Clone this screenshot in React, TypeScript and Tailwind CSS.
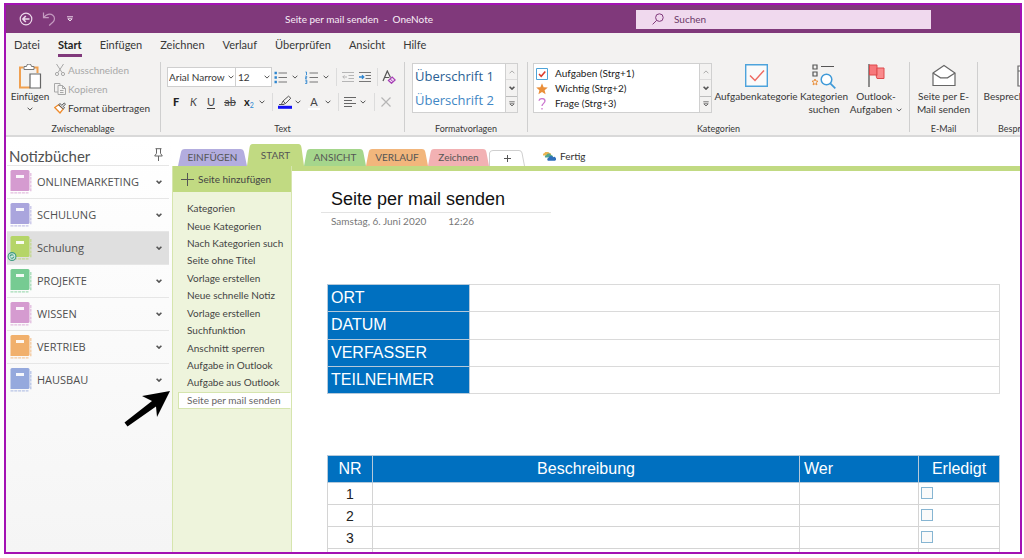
import { useState, type ReactNode } from 'react'
import clsx from 'clsx'

const MENU = ['Datei', 'Start', 'Einfügen', 'Zeichnen', 'Verlauf', 'Überprüfen', 'Ansicht', 'Hilfe']

const NOTEBOOKS = [
  { name: 'ONLINEMARKETING', color: '#d59bd0' },
  { name: 'SCHULUNG', color: '#aaa5dd' },
  { name: 'Schulung', color: '#b5d568', active: true },
  { name: 'PROJEKTE', color: '#76cb92' },
  { name: 'WISSEN', color: '#d59bd0' },
  { name: 'VERTRIEB', color: '#f1b06c' },
  { name: 'HAUSBAU', color: '#95a9dd' },
]

const SECTIONS = [
  { name: 'EINFÜGEN', color: '#b3addf', size: 'w-[69px] h-[17px]' },
  { name: 'START', color: '#c1da82', size: 'w-[57px] h-[22px]' },
  { name: 'ANSICHT', color: '#a5d68c', size: 'w-[62px] h-[17px]' },
  { name: 'VERLAUF', color: '#f2b67c', size: 'w-[62px] h-[17px]' },
  { name: 'Zeichnen', color: '#f2b1b3', size: 'w-[61px] h-[17px]' },
]

const PAGES = [
  'Kategorien',
  'Neue Kategorien',
  'Nach Kategorien such',
  'Seite ohne Titel',
  'Vorlage erstellen',
  'Neue schnelle Notiz',
  'Vorlage erstellen',
  'Suchfunktion',
  'Anschnitt sperren',
  'Aufgabe in Outlook',
  'Aufgabe aus Outlook',
  'Seite per mail senden',
]

function Chevron({ bold = false }: { bold?: boolean }) {
  return (
    <svg viewBox="0 0 6 4" className="w-1.5 h-1 shrink-0" fill="none" stroke="#555" strokeWidth={bold ? 1.6 : 1}>
      <path d="M.6.7 3 3.1 5.4.7" />
    </svg>
  )
}

function Tool({ label, w, children }: { label: string; w: string; children: ReactNode }) {
  return (
    <button type="button" aria-label={label} className={clsx('h-5 flex items-center justify-center shrink-0', w)}>
      {children}
    </button>
  )
}

function Sep({ w }: { w: string }) {
  return (
    <span className={clsx('flex justify-center shrink-0', w)}>
      <span className="w-px h-[18px] bg-[#dcdcdc]" />
    </span>
  )
}

function Group({ label, w, children }: { label: string; w: string; children: ReactNode }) {
  return (
    <section className={clsx('h-[70px] flex flex-col shrink-0 border-r border-[#cfcfcf]', w)}>
      <div className="flex h-[59px] shrink-0">{children}</div>
      <p className="text-center text-[9px] leading-4 whitespace-nowrap">{label}</p>
    </section>
  )
}

function BigButton({ lines, w, caret, children }: { lines: string[]; w: string; caret?: boolean; children: ReactNode }) {
  return (
    <button type="button" className={clsx('flex flex-col items-center shrink-0 pt-0.5 text-[10px] leading-[13px] whitespace-nowrap', w)}>
      <span className="h-[26px]">{children}</span>
      {lines.map((line, i) => (
        <span key={line} className="flex items-center gap-1">
          {line}
          {caret && i === lines.length - 1 && <Chevron />}
        </span>
      ))}
    </button>
  )
}

function GalleryScroll() {
  return (
    <div className="w-3 shrink-0 flex flex-col divide-y divide-[#bdbdbd] border-l border-[#d0d0d0] bg-[#f3f2f1]">
      <button type="button" aria-label="Nach oben" className="flex-1 flex items-center justify-center opacity-40">
        <svg viewBox="0 0 6 4" className="w-1.5 h-1" fill="none" stroke="#444"><path d="M.6 3.3 3 .9l2.4 2.4" /></svg>
      </button>
      <button type="button" aria-label="Nach unten" className="flex-1 flex items-center justify-center"><Chevron bold /></button>
      <button type="button" aria-label="Mehr" className="flex-1 flex items-center justify-center">
        <svg viewBox="0 0 6 6" className="size-1.5" fill="none" stroke="#555" strokeWidth=".8"><path d="M.3.8h5.4M.8 2.8 3 5l2.2-2.2z" /></svg>
      </button>
    </div>
  )
}

function TitleBar() {
  return (
    <header className="h-7 shrink-0 bg-[#80397b] text-[#f8edf7] flex items-center text-[10px]">
      <div className="flex w-[279px] shrink-0 items-center gap-[9px] pl-[13px]">
        <button type="button" aria-label="Zurück">
          <svg viewBox="0 0 14 14" className="size-3.5" fill="none" stroke="#ecd9ea" strokeWidth="1.2">
            <circle cx="7" cy="7" r="5.8" />
            <path d="M10.5 7H4M6.8 4 3.9 7l2.9 3" strokeWidth="1.6" />
          </svg>
        </button>
        <button type="button" aria-label="Rückgängig">
          <svg viewBox="0 0 14 14" className="size-3.5" fill="none" stroke="#c49bc0" strokeWidth="1.2">
            <path d="M1.5.5v5.200h5.300M1.800 5.400C4 2.400 8 1 10.800 3.200c2.400 2 2 5 .2 6.800L7.200 13.500" />
          </svg>
        </button>
        <button type="button" aria-label="Anpassen" className="pl-0.5">
          <svg viewBox="0 0 6 6" className="size-1.5" fill="none" stroke="#ecd9ea"><path d="M0 .8h6M.8 2.800 3 5l2.200-2.200z" /></svg>
        </button>
      </div>
      <h1 className="whitespace-pre">Seite per mail senden  -  OneNote</h1>
      <div className="flex-1 flex justify-end pr-[89px]">
        <label className="flex items-center w-[295px] h-[19px] bg-[#f0d9ee] pl-4 gap-2.5">
          <svg viewBox="0 0 12 12" className="size-3" fill="none" stroke="#80397b">
            <circle cx="7.400" cy="4.600" r="3.800" />
            <path d="M4.600 7.400.6 11.400" />
          </svg>
          <input type="search" aria-label="Suchen" placeholder="Suchen" className="flex-1 min-w-0 bg-transparent outline-none placeholder:text-[#6d3a69]" />
        </label>
      </div>
    </header>
  )
}

function TextGroup() {
  return (
    <div className="pl-1.5 flex flex-col gap-[5px] pt-[5px] text-[11px]">
      <div className="flex items-center">
        <label className="relative flex items-center">
          <select aria-label="Schriftart" className="appearance-none w-[69px] h-5 pl-px bg-white border border-[#cfcfcf] text-[10px]">
            <option>Arial Narrow</option>
          </select>
          <span className="absolute right-0.5 pointer-events-none"><Chevron /></span>
        </label>
        <label className="relative flex items-center -ml-px">
          <select aria-label="Schriftgrad" className="appearance-none w-[37px] h-5 pl-0.5 bg-white border border-[#cfcfcf] text-[10px]">
            <option>12</option>
          </select>
          <span className="absolute right-0.5 pointer-events-none"><Chevron /></span>
        </label>
        <Tool label="Aufzählung" w="w-[17px]">
          <svg viewBox="0 0 13 13" className="size-[13px]">
            <path d="M4.500 2H13M4.500 6.500H13M4.500 11H13" stroke="#777" />
            <path d="M.5.800h2.400v2.400H.5zM.5 5.300h2.400v2.400H.5zM.5 9.800h2.400v2.400H.5z" fill="#2e86d0" />
          </svg>
        </Tool>
        <Tool label="Aufzählungsart" w="w-3"><Chevron /></Tool>
        <Tool label="Nummerierung" w="w-5">
          <svg viewBox="0 0 13 13" className="size-[13px]" fill="none">
            <path d="M4.500 2H13M4.500 6.500H13M4.500 11H13" stroke="#777" />
            <path d="M.5 1h1v3M.2 5.200h1.500v1.300H.5v1.300h1.500M.2 9.200h1.600v3.300H.2M.5 10.800h1.300" stroke="#2e86d0" strokeWidth=".9" />
          </svg>
        </Tool>
        <Tool label="Nummerierungsart" w="w-2.5"><Chevron /></Tool>
        <Sep w="w-2.5" />
        <Tool label="Einzug verkleinern" w="w-3.5">
          <svg viewBox="0 0 12 12" className="size-3" fill="none" stroke="#b5b5b5">
            <path d="M0 1.500h12M6.500 4.500H12M6.500 7.500H12M0 10.500h12M5 6H.8M2.500 4.300.8 6l1.700 1.700" />
          </svg>
        </Tool>
        <Tool label="Einzug vergrößern" w="w-5">
          <svg viewBox="0 0 12 12" className="size-3" fill="none" stroke="#777">
            <path d="M0 1.500h12M6.500 4.500H12M6.500 7.500H12M0 10.500h12" />
            <path d="M0 6h4.600M3 4.200 4.800 6 3 7.800" stroke="#2e86d0" strokeWidth="1.300" />
          </svg>
        </Tool>
        <Sep w="w-1" />
        <Tool label="Formatierung löschen" w="w-5">
          <svg viewBox="0 0 14 14" className="size-3.5" fill="none">
            <path d="M1 11 5.300 1 8.500 7.500M2.600 7.500h4.600" stroke="#555" strokeWidth="1.200" />
            <path d="m6.400 10.400 3.800-3.300 3 2.900-3.700 3.300z" fill="#f3dff5" stroke="#a63fb5" strokeWidth="1.200" />
            <path d="m8.200 8.900 2.900 2.900" stroke="#a63fb5" />
          </svg>
        </Tool>
      </div>
      <div className="flex items-center text-[#444]">
        <Tool label="Fett" w="w-[18px]"><b className="font-black text-[#222]">F</b></Tool>
        <Tool label="Kursiv" w="w-[17px]"><i>K</i></Tool>
        <Tool label="Unterstrichen" w="w-[18px]"><u className="underline-offset-2">U</u></Tool>
        <Tool label="Durchgestrichen" w="w-5"><s>ab</s></Tool>
        <Tool label="Tiefgestellt" w="w-[18px]">
          <span><b className="text-[#222]">x</b><sub className="text-[7px] text-[#2e86d0]">2</sub></span>
        </Tool>
        <Tool label="Weitere Schriftoptionen" w="w-2"><Chevron /></Tool>
        <Sep w="w-3" />
        <Tool label="Texthervorhebung" w="w-3.5">
          <svg viewBox="0 0 14 14" className="size-3.5">
            <path d="M3.500 9.200 5 6l5.500-4.800 2.300 2L7.600 8.500 5 9.500M5 6l2.600 2.500M1 9.500h5" fill="none" stroke="#555" />
            <path d="M0 10.800h14v3H0z" fill="#1111f5" />
          </svg>
        </Tool>
        <Tool label="Hervorhebungsfarbe" w="w-3"><Chevron /></Tool>
        <Tool label="Schriftfarbe" w="w-5">
          <span className="w-3 border-b-2 border-white leading-[13px]">A</span>
        </Tool>
        <Tool label="Farbauswahl" w="w-2"><Chevron /></Tool>
        <Sep w="w-3" />
        <Tool label="Ausrichtung" w="w-3">
          <svg viewBox="0 0 12 12" className="size-3" stroke="#666"><path d="M0 1.500h12M0 4.500h8M0 7.500h12M0 10.500h8" /></svg>
        </Tool>
        <Tool label="Ausrichtungsart" w="w-3.5"><Chevron /></Tool>
        <Sep w="w-2" />
        <Tool label="Löschen" w="w-4">
          <svg viewBox="0 0 10 10" className="size-2.5" stroke="#b5b5b5" strokeWidth="1.200"><path d="m.5.500 9 9M9.500.500l-9 9" /></svg>
        </Tool>
      </div>
    </div>
  )
}

function Ribbon() {
  return (
    <div className="shrink-0 bg-[#f3f2f1] text-[#383838] border-b-2 border-[#d9d9d9]">
      <nav className="flex h-[24px] pl-2 gap-[18px] text-[11px]">
        {MENU.map((item) => (
          <a
            key={item}
            href="#"
            className={clsx('leading-[24px]', item === 'Start' && 'font-bold text-[#222] border-b-[3px] border-[#80397b]')}
          >
            {item}
          </a>
        ))}
      </nav>
      <div className="flex pt-[5px] h-[78px] overflow-hidden">
        <Group label="Zwischenablage" w="w-[155px]">
          <button type="button" className="w-12 flex flex-col items-center pt-0.5 text-[10px] leading-[13px]">
            <svg viewBox="0 0 24 26" className="w-6 h-[26px]" fill="none">
              <path d="M5.500 3.500H2v20h10M16 3.500h3.500V9" stroke="#f0a050" strokeWidth="2" />
              <path d="M6 5.500v-3h2.500a2.500 2.500 0 0 1 5 0H16v3z" fill="#fff" stroke="#777" />
              <path d="M12 10h10.500v14H12z" fill="#fff" stroke="#666" strokeWidth="1.200" />
            </svg>
            <span className="pb-1">Einfügen</span>
            <Chevron />
          </button>
          <div className="flex flex-col gap-[3px] text-[10px] leading-4 items-start">
            <button type="button" className="flex items-center gap-0.5 text-[#a8a8a8]">
              <svg viewBox="0 0 12 12" className="size-3" fill="none" stroke="#a8a8a8">
                <path d="M2.500 0 8 8.500M9.500 0 4 8.500" />
                <circle cx="3" cy="10" r="1.600" /><circle cx="9" cy="10" r="1.600" />
              </svg>
              Ausschneiden
            </button>
            <button type="button" className="flex items-center gap-0.5 text-[#a8a8a8]">
              <svg viewBox="0 0 12 12" className="size-3" fill="none" stroke="#a8a8a8">
                <path d="M4 9H.5V.500H6V2M4 2.500h4.500l3 3v6H4zM8.500 2.500v3h3M6 7.500h3.500M6 9.500h3.500" />
              </svg>
              Kopieren
            </button>
            <button type="button" className="flex items-center gap-0.5">
              <svg viewBox="0 0 13 12" className="w-3 h-3" fill="none">
                <path d="M.8 5.500 6.500 11.300 10 7 5 2.500z" fill="#fff" stroke="#ef8b2c" strokeWidth="1.500" />
                <path d="m5 2.500 1.500-1.300L8.500 3 11 .6l1.500 1.300L10 4.300l1.500 1.500L10 7z" fill="#ddd" stroke="#555" />
              </svg>
              Format übertragen
            </button>
          </div>
        </Group>

        <Group label="Text" w="w-[244px]"><TextGroup /></Group>

        <Group label="Formatvorlagen" w="w-[123px]">
          <div className="flex ml-[7px] mt-px h-[50px] w-[106px] bg-white border border-[#d0d0d0]">
            <div className="flex-1 flex flex-col pl-0.5 text-[13px] leading-6 whitespace-nowrap font-['Open_Sans',sans-serif]">
              <button type="button" className="text-left text-[#2a5f94]">Überschrift 1</button>
              <button type="button" className="text-left text-[#3f87c5]">Überschrift 2</button>
            </div>
            <GalleryScroll />
          </div>
        </Group>

        <Group label="Kategorien" w="w-[382px]">
          <div className="flex ml-[5px] mt-px h-[50px] w-[179px] shrink-0 bg-white border border-[#d0d0d0]">
            <div className="flex-1 flex flex-col pl-0.5 pt-0.5 text-[10px] leading-[15px] text-[#222] whitespace-nowrap">
              <button type="button" className="flex items-center gap-[7px]">
                <svg viewBox="0 0 12 12" className="size-3" fill="#fff">
                  <path d="M.5.500h11v11H.5z" stroke="#4da3d8" />
                  <path d="m3 6 2.200 2.300L9.300 3.500" fill="none" stroke="#dc3b2c" strokeWidth="1.500" />
                </svg>
                Aufgaben (Strg+1)
              </button>
              <button type="button" className="flex items-center gap-[7px]">
                <svg viewBox="0 0 12 12" className="size-3" fill="#ea8f3a">
                  <path d="m6 .300 1.600 3.900 4.200.3-3.200 2.700 1 4.100L6 9.100l-3.600 2.200 1-4.100L.2 4.500l4.200-.3z" />
                </svg>
                Wichtig (Strg+2)
              </button>
              <button type="button" className="flex items-center gap-[7px]">
                <svg viewBox="0 0 12 12" className="size-3" fill="none" stroke="#cb76cf" strokeWidth="1.300">
                  <path d="M3 2.800C3.200 1 4.500.600 6 .600c1.800 0 3 1 3 2.500 0 2.200-3 2.400-3 5M6 10v1.600" />
                </svg>
                Frage (Strg+3)
              </button>
            </div>
            <GalleryScroll />
          </div>
          <BigButton lines={['Aufgabenkategorie']} w="w-[88px]">
            <svg viewBox="0 0 23 23" className="size-[23px]" fill="#fafafa">
              <path d="M.7.700h21.600v21.600H.7z" stroke="#4da3dc" strokeWidth="1.400" />
              <path d="m5 11.500 5 5 9-10" fill="none" stroke="#ee6a62" strokeWidth="1.500" />
            </svg>
          </BigButton>
          <BigButton lines={['Kategorien', 'suchen']} w="w-12">
            <svg viewBox="0 0 24 25" className="w-6 h-[25px]" fill="none" stroke="#555">
              <path d="M1 1h4v4H1zM1 8h4v4H1zM9 2.500h13" strokeWidth="1.200" />
              <path d="m3 15 .9 2 2.100.2-1.600 1.500.5 2.200L3 19.700l-1.900 1.200.5-2.200L0 17.200l2.100-.2z" stroke="#ea8f3a" />
              <circle cx="14.500" cy="15.500" r="5.300" stroke="#3f9ad8" strokeWidth="1.500" fill="#fff" />
              <path d="m18.300 19.300 5 5" stroke="#3f9ad8" strokeWidth="1.700" />
            </svg>
          </BigButton>
          <BigButton lines={['Outlook-', 'Aufgaben']} w="w-14" caret>
            <svg viewBox="0 0 17 24" className="w-[17px] h-6">
              <path d="M1 0v23" stroke="#555" strokeWidth="1.300" />
              <path d="M1.500 1h7.500v10H1.500z" fill="#f7777b" stroke="#dd4a4d" />
              <path d="M9 4h7v10.500H9l-1-3h1z" fill="#fa8a8c" stroke="#dd4a4d" />
            </svg>
          </BigButton>
        </Group>

        <Group label="E-Mail" w="w-[68px]">
          <BigButton lines={['Seite per E-', 'Mail senden']} w="w-full">
            <svg viewBox="0 0 24 24" className="size-6" fill="#fff" stroke="#666" strokeWidth="1.200">
              <path d="M1 9 12 1.500 23 9v12.500H1z" />
              <path d="m1 9 7.500 4.800h7L23 9" fill="none" />
            </svg>
          </BigButton>
        </Group>

        <Group label="Besprechungen" w="w-[102px]">
          <BigButton lines={['Besprechungsdetails']} w="w-full">
            <svg viewBox="0 0 23 24" className="w-[23px] h-6" fill="#fff" stroke="#666" strokeWidth="1.200">
              <path d="M1 2h21v20H1zM1 7h21" />
            </svg>
          </BigButton>
        </Group>
      </div>
    </div>
  )
}

function NotebookIcon({ color, synced }: { color: string; synced?: boolean }) {
  return (
    <svg viewBox="0 0 26 26" className="w-[26px] h-[26px] shrink-0">
      <path d="M5 1h16a1.500 1.500 0 0 1 1.500 1.500V20.500a1.500 1.500 0 0 1-1.500 1.500H3.500V2.500A1.500 1.500 0 0 1 5 1z" fill={color} />
      <path d="M3.500 23.800H21.500M23.800 4v19" stroke={color} strokeWidth="1.300" strokeDasharray="3 .8" opacity=".65" />
      <path d="M9 6h8v3H9z" fill="#fff" opacity=".9" />
      {synced && (
        <g fill="none" stroke="#3f9a80" strokeWidth="1.100">
          <circle cx="5" cy="21.500" r="3.900" fill="#d5ebe2" />
          <path d="M3 21.500a2 2 0 0 1 3.500-1M7 21.500a2 2 0 0 1-3.500 1" />
        </g>
      )}
    </svg>
  )
}

function Notebooks() {
  return (
    <aside className="w-[166px] shrink-0 pl-px pr-[3px] bg-linear-to-b from-white to-[#f5f5f5] text-[#505050]">
      <div className="flex items-center justify-between h-[28px] pt-2.5 pl-0.5 pr-1.5">
        <h2 className="text-[15px] leading-5">Notizbücher</h2>
        <button type="button" aria-label="Anheften">
          <svg viewBox="0 0 9 13" className="w-[9px] h-[13px] mb-1" fill="none" stroke="#666">
            <path d="M1.500.700h6M2.500.700v4.600L.7 8h7.600L6.500 5.300V.700M4.500 8v5" />
          </svg>
        </button>
      </div>
      <ul>
        {NOTEBOOKS.map((nb) => (
          <li key={nb.name} className={clsx('border-t border-[#e6e6e6]', nb.active && 'bg-[#dfdfdf]')}>
            <button type="button" className="w-full h-8 flex items-center pr-[7px] text-[11px] font-['Open_Sans',sans-serif]">
              <NotebookIcon color={nb.color} synced={nb.active} />
              <span className="pl-1 flex-1 text-left">{nb.name}</span>
              <Chevron bold />
            </button>
          </li>
        ))}
      </ul>
    </aside>
  )
}

function SectionTabs({ current, onSelect }: { current: string; onSelect: (name: string) => void }) {
  return (
    <div className="flex items-end h-[29px] pl-1.5 shrink-0 text-[10px] text-[#555]">
      {SECTIONS.map((s) => (
        <button
          key={s.name}
          type="button"
          aria-pressed={s.name === current}
          onClick={() => onSelect(s.name)}
          className={clsx('relative flex items-center justify-center', s.size)}
        >
          <svg viewBox="0 0 60 20" preserveAspectRatio="none" className="absolute inset-0 size-full">
            <path d="M0 20 2.500 4Q3 0 6 0H54Q57 0 57.500 4L60 20z" fill={s.color} />
          </svg>
          <span className="relative">{s.name}</span>
        </button>
      ))}
      <button type="button" aria-label="Neuer Abschnitt" className="relative w-9 h-4 flex items-center justify-center">
        <svg viewBox="0 0 36 16" className="absolute inset-0 size-full" fill="#fff" stroke="#cfcfcf">
          <path d="M.5 16V3Q1 .500 4 .500H30Q32.500.500 33 3L35.500 16" />
        </svg>
        <svg viewBox="0 0 7 7" className="relative size-[7px]" stroke="#555"><path d="M0 3.500h7M3.500 0v7" /></svg>
      </button>
      <div className="flex items-center gap-1 pl-[18px] h-5 text-[#333]">
        <svg viewBox="0 0 13 9" className="w-[13px] h-[9px]">
          <path d="M0 3.500a2 2 0 0 1 1.500-2.500A2.500 2.500 0 0 1 6 .8 2 2 0 0 1 8 3.500z" fill="#e9b552" />
          <path d="M2 5.500a1.800 1.800 0 0 1 1.500-2.500 2.500 2.500 0 0 1 4.500 0 2 2 0 0 1 2 2.500z" fill="#55a68f" />
          <path d="M5 8.700a1.700 1.700 0 0 1 .5-3 2.500 2.500 0 0 1 4.500-.5 2 2 0 0 1 2 3.500z" fill="#2f6fba" />
        </svg>
        Fertig
      </div>
    </div>
  )
}

function PageList({ current, onSelect }: { current: number; onSelect: (i: number) => void }) {
  return (
    <aside className="w-[120px] shrink-0 bg-[#eef4dc] border-x border-[#d6e5ae] text-[10px] text-[#444]">
      <button type="button" className="w-full h-[26px] flex items-center gap-1 pl-2 bg-[#c1da82]">
        <svg viewBox="0 0 13 13" className="size-[13px]" stroke="#555"><path d="M0 6.500h13M6.500 0v13" /></svg>
        Seite hinzufügen
      </button>
      <ul className="mt-2 h-[209px] flex flex-col pl-[5px]">
        {PAGES.map((page, i) => (
          <li key={i} className="flex-1 flex">
            <button
              type="button"
              onClick={() => onSelect(i)}
              className={clsx(
                'flex-1 flex items-center pl-2 border whitespace-nowrap',
                i === current ? 'bg-white border-[#d6e5ae] border-r-white text-[#666]' : 'border-transparent',
              )}
            >
              {page}
            </button>
          </li>
        ))}
      </ul>
    </aside>
  )
}

function Note() {
  return (
    <main className="flex-1 min-w-0 overflow-hidden border-t-[5px] border-[#c1da82] bg-white pl-[35px] pr-5 font-['Liberation_Sans_Narrow','Liberation_Sans',sans-serif]">
      <h2 className="-ml-1.5 pl-2.5 w-[230px] mt-3.5 h-[28px] leading-[28px] text-[18px] whitespace-nowrap text-[#111] border-b border-[#e3e3e3]">
        Seite per mail senden
      </h2>
      <p className="flex gap-[22px] pl-1 text-[10px] leading-4 text-[#777] font-[Lato,sans-serif]">
        <span>Samstag, 6. Juni 2020</span>
        <span>12:26</span>
      </p>
      <table className="mt-[55px] w-full h-[110px] border-collapse text-[16px]">
        <tbody>
          {['ORT', 'DATUM', 'VERFASSER', 'TEILNEHMER'].map((row) => (
            <tr key={row}>
              <th scope="row" className="w-[142px] px-[3px] py-0 leading-6 text-left font-normal text-white bg-[#0070c0] border border-[#b5c9da]">{row}</th>
              <td className="border border-[#dadada]" />
            </tr>
          ))}
        </tbody>
      </table>
      <table className="mt-[61px] w-full border-collapse">
        <thead>
          <tr className="h-[27px] bg-[#0070c0] text-white text-[16px] leading-6 *:font-normal *:py-0 *:border *:border-[#b5c9da]">
            <th scope="col" className="w-[45px]">NR</th>
            <th scope="col">Beschreibung</th>
            <th scope="col" className="w-[119px] text-left pl-1">Wer</th>
            <th scope="col" className="w-[81px]">Erledigt</th>
          </tr>
        </thead>
        <tbody>
          {['1', '2', '3', ''].map((n) => (
            <tr key={n} className="h-[22px] text-[14px] leading-5 text-[#222] *:border *:border-[#d4d4d4] *:py-0">
              <td className="text-center">{n}</td>
              <td />
              <td />
              <td className="pl-0.5">
                {n && <input type="checkbox" aria-label={`Erledigt ${n}`} className="appearance-none block size-3 mb-0.5 border border-[#86b5d2] bg-[#fafafa]" />}
              </td>
            </tr>
          ))}
        </tbody>
      </table>
    </main>
  )
}

export default function App() {
  const [section, setSection] = useState('START')
  const [page, setPage] = useState(PAGES.length - 1)

  return (
    <div className="h-screen bg-white pt-[3px] pl-1 pr-0.5 pb-1 font-[Lato,sans-serif]">
      <div className="h-full flex flex-col overflow-hidden border-2 border-[#a311b3]">
        <TitleBar />
        <Ribbon />
        <div className="relative flex-1 min-h-0 flex">
          <Notebooks />
          <div className="flex-1 min-w-0 flex flex-col">
            <SectionTabs current={section} onSelect={setSection} />
            <div className="flex-1 min-h-0 flex">
              <PageList current={page} onSelect={setPage} />
              <Note />
            </div>
          </div>
          <svg viewBox="0 0 48 38" className="absolute left-[117px] top-[252px] w-12 h-[38px] pointer-events-none">
            <path d="M1.500 33.500 29 12 19 7 47 2 34 28 33 17.500 4.500 37.500z" />
          </svg>
        </div>
      </div>
    </div>
  )
}
